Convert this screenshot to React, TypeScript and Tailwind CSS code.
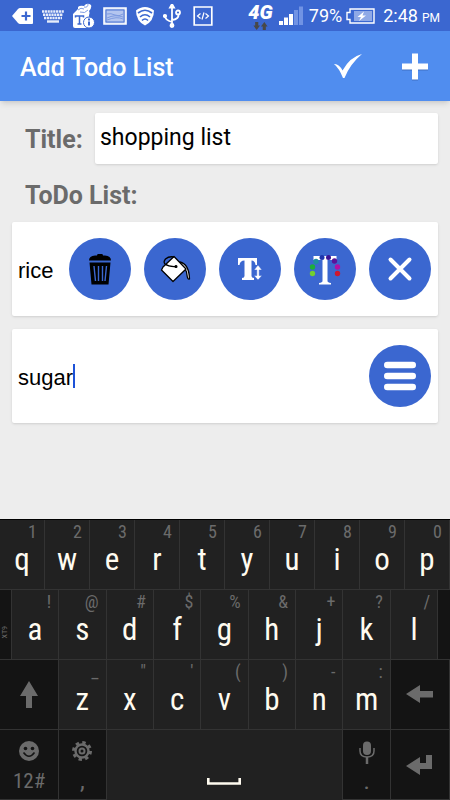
import React from "react";

type KeyType = { label: string; alt: string };

const toKeys = (letters: string, alts: string): KeyType[] =>
    letters.split("").map((label, idx) => ({ label, alt: alts[idx] }));

const topRow = toKeys("qwertyuiop", "1234567890");
const homeRow = toKeys("asdfghjkl", "!@#$%&+?/");
const bottomRow = toKeys("zxcvbnm", "_\"'()-:");

export default function App() {
    return (
        <div className="flex min-h-screen flex-col bg-[#ededed] font-['Roboto',sans-serif]">
            <StatusBar />
            <AppBar />
            <TodoForm />
            <Keyboard />
        </div>
    );
}

const StatusBar = () => (
    <div className="flex h-[31px] items-center bg-[#3b67d0] pr-2.5 pl-3 text-white">
        <div className="flex flex-1 items-center gap-2">
            <svg className="h-5 w-[22px]" viewBox="0 0 22 20">
                <path d="M0 10 6 3Q7 2 8 2H20Q21 2 21 3V17Q21 18 20 18H8Q7 18 6 17Z" fill="#fff" />
                <path d="M14 5.500v9M9.500 10h9" stroke="#3b67d0" strokeWidth="2.200" />
            </svg>
            <svg className="h-5 w-[22px]" viewBox="0 0 22 20" stroke="#e6ecfa" strokeWidth="2.400">
                <path d="M0 5.500H22M1 8.700H21M2 12H20" strokeDasharray="2.200 .6" />
                <path d="M5 15.500H17" />
            </svg>
            <svg className="h-[26px] w-[23px]" viewBox="0 0 23 26">
                <path d="M1 11 6 6V4Q8 2 12 3 15-1 19 2 20 5 17 8 18 10 17 12L18 24Q18 25 17 25H3Q1 25 1 23Z" fill="#fff" />
                <path d="M6 7Q9 4 12 6M12 4Q16 5 16 1M8 9Q13 11 16 7" fill="none" stroke="#7f9ce2" />
                <path d="M3.500 14.500V13h8v1.500M7.500 13v8M5.500 21h4" fill="none" stroke="#3b67d0" strokeWidth="1.500" />
                <circle cx="17" cy="19.500" r="5.500" fill="#fff" stroke="#3b67d0" />
                <path d="M17 18.500v4M17 15.500v2" stroke="#3b67d0" strokeWidth="2" />
            </svg>
            <svg className="h-5 w-6" viewBox="0 0 24 20">
                <path d="M1 2H23V18H1Z" fill="#b4c5ef" stroke="#fff" strokeWidth="1.600" />
                <path d="M3 4H21V16H3Z" fill="none" stroke="#4d74d2" />
                <path d="M4 8Q8 7 12 9T20 8M4 12Q12 8 20 11M4 14Q14 10 20 13" fill="none" stroke="#7d9ae0" />
            </svg>
            <svg className="h-5 w-5" viewBox="0 0 20 20">
                <path d="M10 1Q15 1 19 4.500 19 15 10 19.500 1 15 1 4.500 5 1 10 1Z" fill="#fff" />
                <path d="M3 7Q10 1.500 17 7M5 11Q10 6.500 15 11M7 14.500Q10 11.500 13 14.500" fill="none" stroke="#3b67d0" strokeWidth="1.600" />
            </svg>
            <svg className="h-6 w-[18px]" viewBox="0 0 18 24" fill="none" stroke="#fff" strokeWidth="1.800">
                <path d="M9 2V21M9 18Q2 16 2 12M9 16Q16 15 15.500 10.500" />
                <path d="M9 0 11 3.500H7Z" fill="#fff" />
                <circle cx="2" cy="12" r="1.200" fill="#fff" />
                <circle cx="15" cy="8.500" r="2" />
                <circle cx="9" cy="21.500" r="1.500" fill="#fff" />
            </svg>
            <svg className="ml-1 h-5 w-5" viewBox="0 0 20 20" fill="none" stroke="#fff">
                <path d="M1.200 1H18.800V19H1.200Z" strokeWidth="1.700" />
                <path d="M7.500 7.500 4.500 10 7.500 12.500M12.500 7.500 15.500 10 12.500 12.500M11 6.500 9 13.500" strokeWidth="1.200" />
            </svg>
        </div>
        <div className="flex items-center">
            <div className="mr-1 flex flex-col items-center">
                <span className="px-0.5 text-xl leading-5 font-black italic">4G</span>
                <svg className="h-2 w-[17px]" viewBox="0 0 17 9" fill="#484848">
                    <path d="M2.500 0H6V4H8L4.200 9 .5 4H2.500ZM11 9H14.500V5H16.500L12.800 0 9 5H11Z" />
                </svg>
            </div>
            <svg className="mr-1.5 h-5 w-6" viewBox="0 0 24 20" fill="#fff">
                <path d="M0 15H4V19H0ZM5 11.500H9V19H5ZM10 8H14V19H10Z" />
                <path d="M15 4H19V19H15ZM20 .5H24V19H20Z" fill="#7193e4" />
            </svg>
            <span className="text-lg leading-5">79%</span>
            <svg className="mr-2 ml-1 h-4 w-[29px]" viewBox="0 0 29 16">
                <path d="M4 1H28V15H4V11.500H1V4.500H4Z" fill="#3b67d0" stroke="#fff" strokeWidth="1.400" />
                <path d="M8 3H26V13H8Z" fill="#8fa9e6" />
                <path d="M18 3.500 11.500 9H15L13 13 20 7.500H16.500Z" fill="#fff" />
            </svg>
            <span className="text-lg leading-5">2:48</span>
            <span className="ml-1 pt-1 text-xs leading-4">PM</span>
        </div>
    </div>
);

const AppBar = () => (
    <header className="flex h-[70px] items-center bg-[#508def] px-5 text-white shadow-md">
        <h1 className="flex-1 pt-1 text-[25px] leading-8 font-medium">Add Todo List</h1>
        <button type="button" aria-label="Save list" className="mr-[34px]">
            <svg className="h-8 w-8" viewBox="0 0 32 32" fill="#fff">
                <path d="M2 14Q7 13.500 10.500 20.500 18 7 30 4 18 14 12.500 28H11Q7 18 2 14Z" />
            </svg>
        </button>
        <button type="button" aria-label="Add item">
            <svg className="h-8 w-8" viewBox="0 0 32 32">
                <path d="M17 4.500V30.500M4 17.500H30" stroke="#3f70c4" strokeWidth="6" />
                <path d="M17 3.500V29.500M4 16.500H30" stroke="#fff" strokeWidth="6" />
            </svg>
        </button>
    </header>
);

const TodoForm = () => (
    <main className="flex-1 px-3 pt-3 pb-6">
        <div className="flex items-center">
            <label htmlFor="title" className="w-[83px] pt-0.5 pl-[13px] text-[25px] leading-8 font-bold text-[#6b6b6b]">
                Title:
            </label>
            <input
                id="title"
                defaultValue="shopping list"
                className="h-[51px] min-w-0 flex-1 rounded-xs bg-white px-[5px] pb-0.5 text-[23px] text-black shadow outline-none"
            />
        </div>
        <h2 className="mt-4 mb-2.5 pl-[13px] text-[25px] leading-8 font-bold text-[#6b6b6b]">ToDo List:</h2>
        <div className="flex flex-col gap-[13px]">
            <TodoItem name="rice">
                <CircleButton label="Delete item">
                    <TrashIcon />
                </CircleButton>
                <CircleButton label="Background color">
                    <BucketIcon />
                </CircleButton>
                <CircleButton label="Text size">
                    <TextSizeIcon />
                </CircleButton>
                <CircleButton label="Text color">
                    <TextColorIcon />
                </CircleButton>
                <CircleButton label="Close menu">
                    <svg className="h-8 w-8" viewBox="0 0 32 32" stroke="#fff" strokeWidth="4" strokeLinecap="round">
                        <path d="M6.500 6.500 25.500 25.500M25.500 6.500 6.500 25.500" />
                    </svg>
                </CircleButton>
            </TodoItem>
            <TodoItem name="sugar" active>
                <CircleButton label="Open menu">
                    <svg className="h-8 w-8" viewBox="0 0 32 32" stroke="#fff" strokeWidth="6.600" strokeLinecap="round">
                        <path d="M3.300 5H28.700M3.300 16H28.700M3.300 27H28.700" />
                    </svg>
                </CircleButton>
            </TodoItem>
        </div>
    </main>
);

const TodoItem: React.FC<{ name: string; active?: boolean; children: React.ReactNode }> = ({
    name,
    active,
    children,
}) => (
    <div className="flex h-[94px] items-center rounded-xs bg-white pr-[7px] pl-1.5 shadow-sm">
        <div className="flex min-w-0 flex-1 items-center">
            <input
                aria-label="Item"
                defaultValue={name}
                className="field-sizing-content max-w-full pt-0.5 font-['Liberation_Sans',sans-serif] text-[22px] text-black outline-none"
            />
            {active && <span className="h-6 w-0.5 bg-[#1d52d8]" />}
        </div>
        <div className="flex gap-[13px]">{children}</div>
    </div>
);

const CircleButton: React.FC<{ label: string; children: React.ReactNode }> = ({ label, children }) => (
    <button
        type="button"
        aria-label={label}
        className="flex h-[62px] w-[62px] items-center justify-center rounded-full bg-[#3b67d0]"
    >
        {children}
    </button>
);

const TrashIcon = () => (
    <svg className="h-8 w-8" viewBox="0 0 32 32">
        <path d="M5 7.500Q5 3 11 2.500H13Q13 1 14 1H18Q19 1 19 2.500H21Q27 3 27 7.500Z" />
        <path d="M5.500 9.500H26.500L24.500 31.500H7.500Z" />
        <path d="M10 13 11.500 28M14.500 13V28M18.500 13V28M22.500 13 21 28" stroke="#3b67d0" strokeWidth="1.400" />
    </svg>
);

const BucketIcon = () => (
    <svg className="h-8 w-8" viewBox="0 0 32 32" stroke="#000" strokeWidth="1.300" strokeLinejoin="round">
        <path d="M21 9Q30 11 30.500 26 28.500 27 28 22 27.500 15 22 13Z" fill="#fff" />
        <path d="M15 3.500 27 16 14 28.500 2.500 17 4 14Z" fill="#fff" />
        <path d="M15 4Q10 3 6.500 6 4 9 6 11 10 14 17 13.500" fill="none" />
        <circle cx="17" cy="13.500" r=".9" fill="#000" />
    </svg>
);

const TextSizeIcon = () => (
    <svg className="h-8 w-8" viewBox="0 0 32 32" fill="#fff">
        <path d="M4 5H23V12H21.500Q21 7.500 17.500 7.500V23Q17.500 25 20 25V27H8V25Q10.500 25 10.500 23V7.500Q6 7.500 5.500 12H4Z" />
        <path d="M24 12 28 17H25.200V22.500H28L24 27 20 22.500H22.800V17H20Z" stroke="#3b67d0" strokeWidth=".5" />
    </svg>
);

const TextColorIcon = () => (
    <svg className="h-8 w-8" viewBox="0 0 32 32">
        <path d="M4.500 3H27.500V7H18.500V28Q18.500 29.500 22 30V31.500H10V30Q13.500 29.500 13.500 28V7H4.500Z" fill="#fff" />
        <circle cx="3.500" cy="20.500" r="2.700" fill="#72cf32" />
        <circle cx="3.500" cy="14" r="2.700" fill="#1cae3a" />
        <circle cx="7" cy="8.500" r="2.700" fill="#1d8f9f" />
        <circle cx="13" cy="4.500" r="2.500" fill="#1e35ad" />
        <circle cx="19.500" cy="4.500" r="2.500" fill="#3c1496" />
        <circle cx="25.500" cy="8" r="2.700" fill="#59149b" />
        <circle cx="28.500" cy="14" r="2.700" fill="#b311a5" />
        <circle cx="28.500" cy="20.500" r="2.700" fill="#ce1830" />
    </svg>
);

const Keyboard = () => (
    <section
        aria-label="Keyboard"
        className="border-t border-black bg-[#212121] font-['Roboto_Condensed','Roboto',sans-serif] text-[#6b6b6b]"
    >
        <div className="grid h-[70px] grid-cols-10">
            {topRow.map((item) => (
                <Key item={item} key={item.label} />
            ))}
        </div>
        <div className="grid h-[70px] grid-cols-[12fr_repeat(9,48fr)_12fr]">
            <div className="flex items-center justify-center border-r border-b border-[#333] bg-[#141414] pt-4">
                <span className="rotate-180 text-[8px] leading-none [writing-mode:vertical-rl]">XT9</span>
            </div>
            {homeRow.map((item) => (
                <Key item={item} key={item.label} />
            ))}
            <div className="border-b border-[#333] bg-[#141414]" />
        </div>
        <div className="grid h-[70px] grid-cols-[60fr_repeat(7,48fr)_60fr]">
            <DarkKey label="Shift">
                <svg className="h-7 w-5" viewBox="0 0 20 28" fill="currentColor">
                    <path d="M10 0 19 15H13V27H7V15H1Z" />
                </svg>
            </DarkKey>
            {bottomRow.map((item) => (
                <Key item={item} key={item.label} />
            ))}
            <DarkKey label="Backspace">
                <svg className="h-5 w-7" viewBox="0 0 28 20" fill="currentColor">
                    <path d="M0 9 14 0V6H27V12.500H14V18Z" />
                </svg>
            </DarkKey>
        </div>
        <div className="grid h-[70px] grid-cols-[60fr_48fr_240fr_48fr_60fr]">
            <DarkKey label="Symbols">
                <svg className="mt-1 h-5 w-5" viewBox="0 0 20 20">
                    <circle cx="10" cy="10" r="10" fill="currentColor" />
                    <path d="M4.500 11.500Q10 19 15.500 11.500" fill="none" stroke="#141414" strokeWidth="1.500" />
                    <circle cx="6.500" cy="7.500" r="1.800" fill="#141414" />
                    <circle cx="13.500" cy="7.500" r="1.800" fill="#141414" />
                </svg>
                <span className="mt-2 text-[21px] leading-6">12#</span>
            </DarkKey>
            <DarkKey label="Comma">
                <svg className="mt-1 h-5 w-5" viewBox="0 0 20 20" fill="none" stroke="currentColor">
                    <circle cx="10" cy="10" r="8.500" strokeWidth="3" strokeDasharray="3.340 3.340" />
                    <circle cx="10" cy="10" r="6.500" strokeWidth="2.400" />
                    <circle cx="10" cy="10" r="2.500" strokeWidth="2" />
                </svg>
                <span className="mt-2 text-2xl leading-6">,</span>
            </DarkKey>
            <button type="button" aria-label="Space" className="flex items-end justify-center border-r border-[#333] pb-3.5">
                <svg className="h-2.5 w-[34px]" viewBox="0 0 34 10" fill="none" stroke="#fffbf0" strokeWidth="2.600">
                    <path d="M1.300 2V7.500H32.700V2" />
                </svg>
            </button>
            <DarkKey label="Period">
                <svg className="mt-1 h-6 w-4" viewBox="0 0 16 24" fill="none" stroke="currentColor">
                    <path d="M4 4.500Q4 .5 8 .5T12 4.500V10Q12 14 8 14T4 10Z" fill="currentColor" stroke="none" />
                    <path d="M1 7V10Q1 16 8 16T15 10V7" strokeWidth="1.500" />
                    <path d="M8 16V23" strokeWidth="2.500" />
                </svg>
                <span className="mt-1 text-2xl leading-6">.</span>
            </DarkKey>
            <DarkKey label="Enter">
                <svg className="h-5 w-7" viewBox="0 0 28 20" fill="currentColor">
                    <path d="M0 11 14 2V8H20V0H26V14H14V20Z" />
                </svg>
            </DarkKey>
        </div>
    </section>
);

const Key: React.FC<{ item: KeyType }> = ({ item }) => (
    <button type="button" className="flex min-w-0 flex-col border-r border-b border-[#333]">
        <span className="self-end pt-0.5 pr-[7px] text-lg leading-5">{item.alt}</span>
        <span className="self-center text-[31px] leading-[35px] text-[#fffbf0]">{item.label}</span>
    </button>
);

const DarkKey: React.FC<{ label: string; children: React.ReactNode }> = ({ label, children }) => (
    <button
        type="button"
        aria-label={label}
        className="flex min-w-0 flex-col items-center justify-center border-r border-b border-[#333] bg-[#141414]"
    >
        {children}
    </button>
);
